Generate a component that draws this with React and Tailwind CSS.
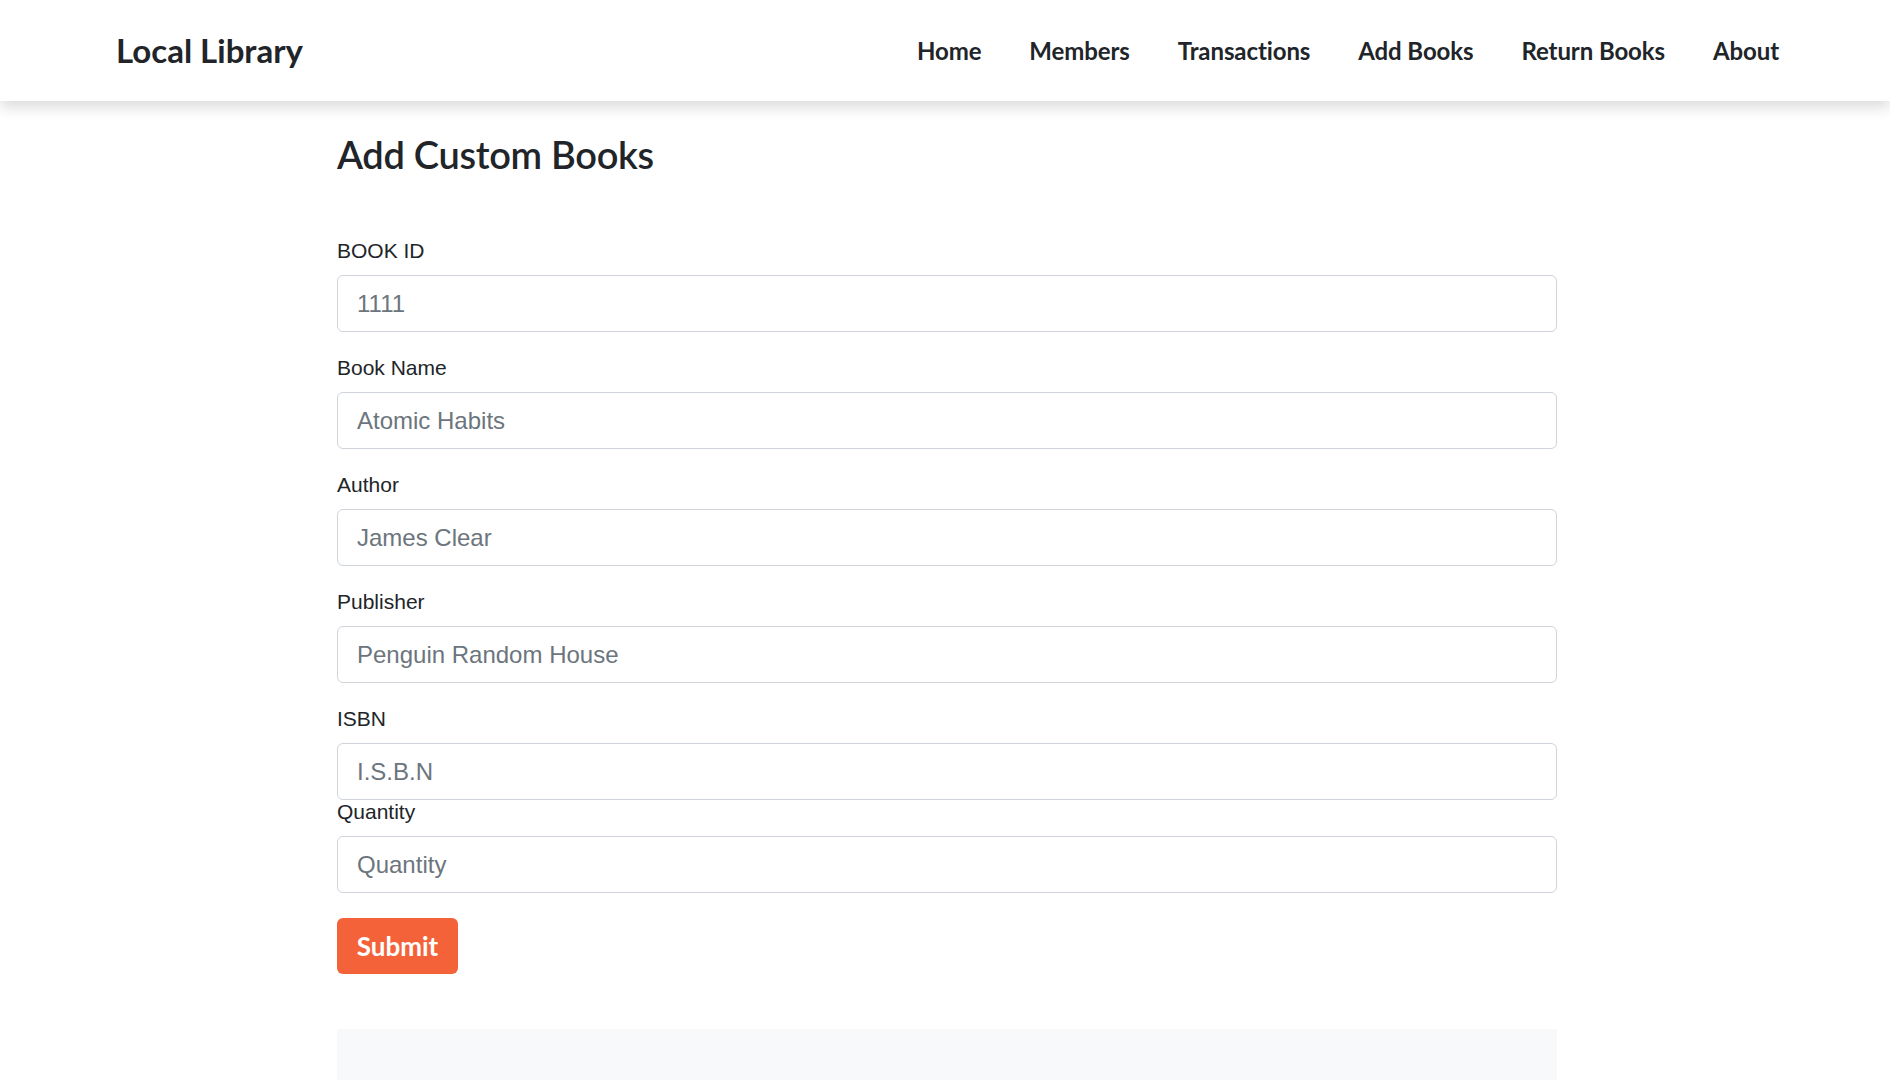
import React, { useState } from 'react';

const fields = [
    { label: 'BOOK ID', placeholder: '1111' },
    { label: 'Book Name', placeholder: 'Atomic Habits' },
    { label: 'Author', placeholder: 'James Clear' },
    { label: 'Publisher', placeholder: 'Penguin Random House' },
    { label: 'ISBN', placeholder: 'I.S.B.N' },
];

const navLinks = ['Home', 'Members', 'Transactions', 'Add Books', 'Return Books', 'About'];

const App = () => {
    const [values, setValues] = useState({});

    const handleChange = (name, value) => {
        setValues({ ...values, [name]: value });
    };

    return (
        <div className="min-h-screen bg-white text-[#212529] font-['Liberation_Sans',Arial,sans-serif]">
            {/* Navbar */}
            <nav className="relative z-10 h-[101px] flex items-center justify-between pl-[116px] pr-[111px] bg-white shadow-[0_6px_14px_rgba(0,0,0,0.15)]">
                <a href="#" className="font-['Lato',sans-serif] font-bold text-[33px] text-[#212529]">
                    Local Library
                </a>
                <ul className="flex items-center gap-[48px]">
                    {navLinks.map((link) => (
                        <li key={link}>
                            <a href="#" className="font-['Lato',sans-serif] font-bold text-[24px] text-[#212529] tracking-[-0.1px]">
                                {link}
                            </a>
                        </li>
                    ))}
                </ul>
            </nav>

            {/* Main Content */}
            <div className="w-[1220px] ml-[337px]">
                <h2 className="mt-[30px] font-['Lato',sans-serif] font-semibold text-[38px] leading-[46px] text-[#212529] tracking-[-0.3px]">
                    Add Custom Books
                </h2>

                <form className="mt-[59px]" onSubmit={(e) => e.preventDefault()}>
                    {fields.map((field) => (
                        <div key={field.label} className="mb-[21px]">
                            <label className="block text-[21px] leading-[30px] mb-[9px]">{field.label}</label>
                            <input
                                type="text"
                                placeholder={field.placeholder}
                                value={values[field.label] || ''}
                                onChange={(e) => handleChange(field.label, e.target.value)}
                                className="w-full h-[57px] px-[19px] text-[24px] border border-[#ced4da] rounded-[6px] placeholder:text-[#6c757d] focus:outline-none"
                            />
                        </div>
                    ))}
                    <div className="-mt-[24px]">
                        <label className="block text-[21px] leading-[30px] mb-[9px]">Quantity</label>
                        <input
                            type="text"
                            placeholder="Quantity"
                            value={values.quantity || ''}
                            onChange={(e) => handleChange('quantity', e.target.value)}
                            className="w-full h-[57px] px-[19px] text-[24px] border border-[#ced4da] rounded-[6px] placeholder:text-[#6c757d] focus:outline-none"
                        />
                    </div>

                    <button
                        type="submit"
                        className="mt-[25px] w-[121px] h-[56px] bg-[#f4623a] text-white font-['Lato',sans-serif] font-bold text-[26px] rounded-[6px]"
                    >
                        Submit
                    </button>
                </form>

                <div className="mt-[55px] h-[200px] bg-[#f8f9fa]"></div>
            </div>
        </div>
    );
};

export default App;
